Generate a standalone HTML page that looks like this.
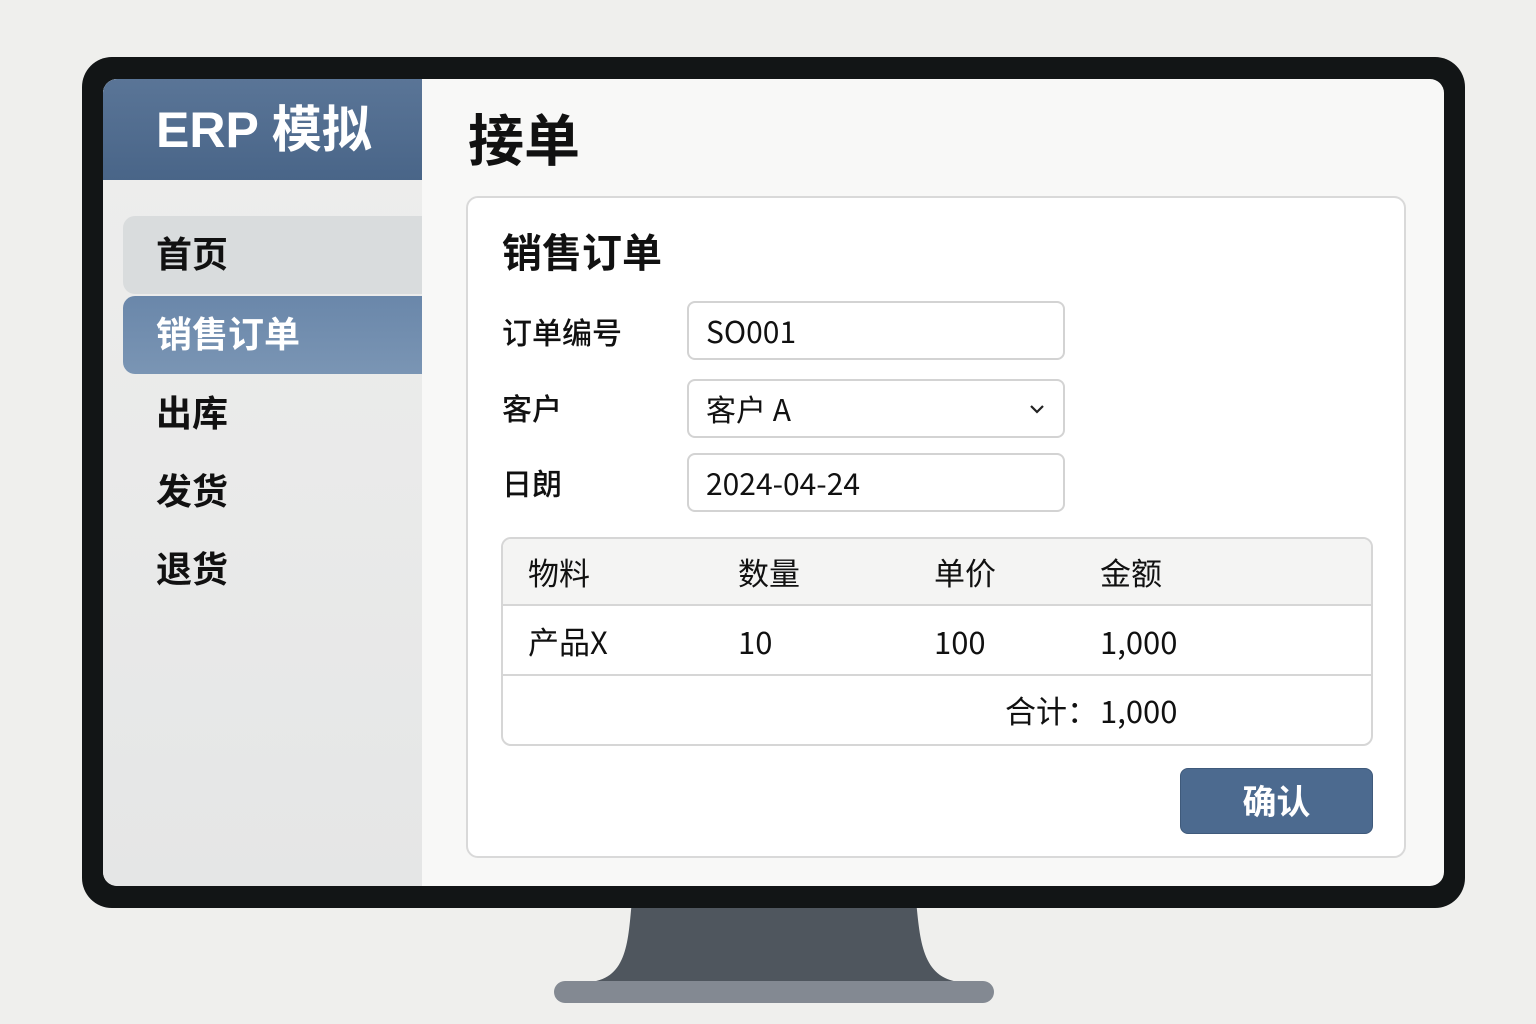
<!DOCTYPE html>
<html><head><meta charset="utf-8"><style>
*{margin:0;padding:0;box-sizing:border-box}
body{width:1536px;height:1024px;background:#efefed;position:relative;overflow:hidden;font-family:"Liberation Sans","Noto Sans CJK SC",sans-serif;color:#111}
.a{position:absolute}
.monitor{left:82px;top:57px;width:1383px;height:851px;background:#121516;border-radius:30px}
.screen{left:103px;top:79px;width:1341px;height:807px;background:#f8f8f7;border-radius:14px;overflow:hidden}
.side{left:0;top:0;width:319px;height:807px;background:linear-gradient(#eeeeed,#e5e6e6)}
.hdr{left:0;top:0;width:319px;height:101px;background:linear-gradient(180deg,#5a7597,#496588);color:#fff;font-size:50px;font-weight:bold;padding:22px 0 0 53px;line-height:58px}
.item{left:20px;width:299px;height:78px;border-radius:12px 0 0 12px;font-size:36px;font-weight:bold;padding-left:33px;line-height:78px}
.title{left:365px;top:18px;font-size:56px;font-weight:bold}
.card{left:363px;top:117px;width:940px;height:662px;background:#fff;border:2px solid #d9d9d9;border-radius:12px;font-family:"Noto Sans CJK SC",sans-serif}
.lbl{font-size:30px;font-weight:500;line-height:36px}
.inp{left:219px;width:378px;height:59px;border:2px solid #d3d3d3;border-radius:8px;font-size:30px;padding-left:17px;line-height:55px;background:#fff}
.tbl{left:33px;top:339px;width:872px;height:209px;border:2px solid #d6d6d6;border-radius:10px;overflow:hidden;font-size:31px}
.row{left:0;width:868px}
.c{position:absolute;line-height:37px}
</style></head><body>
<svg class="a" style="left:540px;top:900px" width="470" height="90"><path d="M92 0 H376 C380 40 382 78 420 82 H50 C88 78 88 40 92 0Z" fill="#4f565e"/></svg>
<div class="a" style="left:554px;top:981px;width:440px;height:22px;background:#838992;border-radius:11px"></div>
<div class="a monitor"></div>
<div class="a screen">
 <div class="a side">
  <div class="a hdr">ERP 模拟</div>
  <div class="a item" style="top:137px;background:#d9dcdd">首页</div>
  <div class="a item" style="top:217px;background:linear-gradient(#6a87aa,#7a95b4);color:#fff">销售订单</div>
  <div class="a item" style="top:296px">出库</div>
  <div class="a item" style="top:374px">发货</div>
  <div class="a item" style="top:452px">退货</div>
 </div>
 <div class="a title">接单</div>
 <div class="a card">
  <div class="a" style="left:34px;top:26px;font-size:40px;font-weight:bold;line-height:52px">销售订单</div>
  <div class="a lbl" style="left:34px;top:115px">订单编号</div>
  <div class="a lbl" style="left:34px;top:191px">客户</div>
  <div class="a lbl" style="left:34px;top:266px">日朗</div>
  <div class="a inp" style="top:103px">SO001</div>
  <div class="a inp" style="top:181px">客户 A<svg class="a" style="right:18px;top:22px" width="16" height="12"><path d="M2 3 L8 9 L14 3" stroke="#222" stroke-width="2.2" fill="none"/></svg></div>
  <div class="a inp" style="top:255px">2024-04-24</div>
  <div class="a tbl">
   <div class="a row" style="top:0;height:67px;background:#f4f4f3;border-bottom:2px solid #d6d6d6">
    <span class="c" style="left:25px;top:14px">物料</span><span class="c" style="left:235px;top:14px">数量</span><span class="c" style="left:431px;top:14px">单价</span><span class="c" style="left:597px;top:14px">金额</span></div>
   <div class="a row" style="top:67px;height:70px;border-bottom:2px solid #d6d6d6">
    <span class="c" style="left:25px;top:16px">产品X</span><span class="c" style="left:235px;top:16px">10</span><span class="c" style="left:431px;top:16px">100</span><span class="c" style="left:597px;top:16px">1,000</span></div>
   <div class="a row" style="top:137px;height:70px">
    <span class="c" style="left:502px;top:15px">合计：</span><span class="c" style="left:597px;top:15px">1,000</span></div>
  </div>
  <div class="a" style="left:712px;top:570px;width:193px;height:66px;background:#4c6a8f;border-radius:8px;color:#fff;font-size:34px;font-weight:bold;text-align:center;line-height:62px;border:1px solid #3f5a7b">确认</div>
 </div>
</div>
</body></html>
